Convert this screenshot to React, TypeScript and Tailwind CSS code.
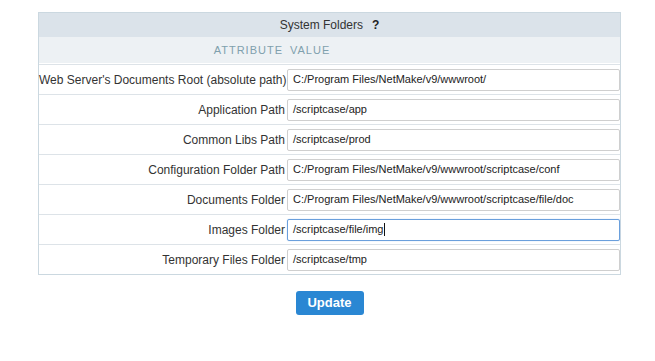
const rows: { label: string; value: string; focused?: boolean }[] = [
  { label: "Web Server's Documents Root (absolute path)", value: "C:/Program Files/NetMake/v9/wwwroot/" },
  { label: "Application Path", value: "/scriptcase/app" },
  { label: "Common Libs Path", value: "/scriptcase/prod" },
  { label: "Configuration Folder Path", value: "C:/Program Files/NetMake/v9/wwwroot/scriptcase/conf" },
  { label: "Documents Folder", value: "C:/Program Files/NetMake/v9/wwwroot/scriptcase/file/doc" },
  { label: "Images Folder", value: "/scriptcase/file/img", focused: true },
  { label: "Temporary Files Folder", value: "/scriptcase/tmp" },
];

export default function App() {
  return (
    <div className="min-h-[361px] w-[655px] bg-white pt-[12px] font-['Liberation_Sans',Arial,sans-serif] text-[#333333]">
      <div className="ml-[38px] w-[583px] border border-[#cbd8e0]">
        <div className="flex h-[24px] items-center justify-center bg-[#dbe3ea] text-[12px]">
          <span>System Folders</span>
          <span className="ml-[9px] font-bold text-[#222]">?</span>
        </div>
        <div className="grid h-[27px] grid-cols-[247px_1fr] items-center border-b border-white bg-[#edf1f4] text-[11px] tracking-[1px] text-[#7fa0ad]">
          <div className="pr-[3px] text-right">ATTRIBUTE</div>
          <div className="pl-[4px]">VALUE</div>
        </div>
        {rows.map((row) => (
          <div
            key={row.label}
            className="grid h-[30px] grid-cols-[247px_1fr] items-center border-t border-[#dde3e8]"
          >
            <div className="whitespace-nowrap pr-[1px] text-right text-[12px] text-[#333]">
              {row.label}
            </div>
            <div className="pl-[1px]">
              <div
                className={
                  row.focused
                    ? "flex h-[22px] items-center rounded-[2px] border border-[#6a9fdc] px-[5px] text-[11px] text-[#222] shadow-[0_0_1px_#8ab4e6]"
                    : "flex h-[22px] items-center rounded-[2px] border border-[#cfcfcf] px-[5px] text-[11px] text-[#222]"
                }
              >
                <span>{row.value}</span>
                {row.focused ? <span className="ml-[1px] h-[13px] w-px bg-[#111]" /> : null}
              </div>
            </div>
          </div>
        ))}
      </div>
      <div className="ml-[38px] mt-[16px] flex w-[583px] justify-center">
        <button
          type="button"
          className="h-[24px] w-[68px] rounded-[3px] bg-[#2a87d3] text-[13px] font-bold text-white"
        >
          Update
        </button>
      </div>
    </div>
  );
}
